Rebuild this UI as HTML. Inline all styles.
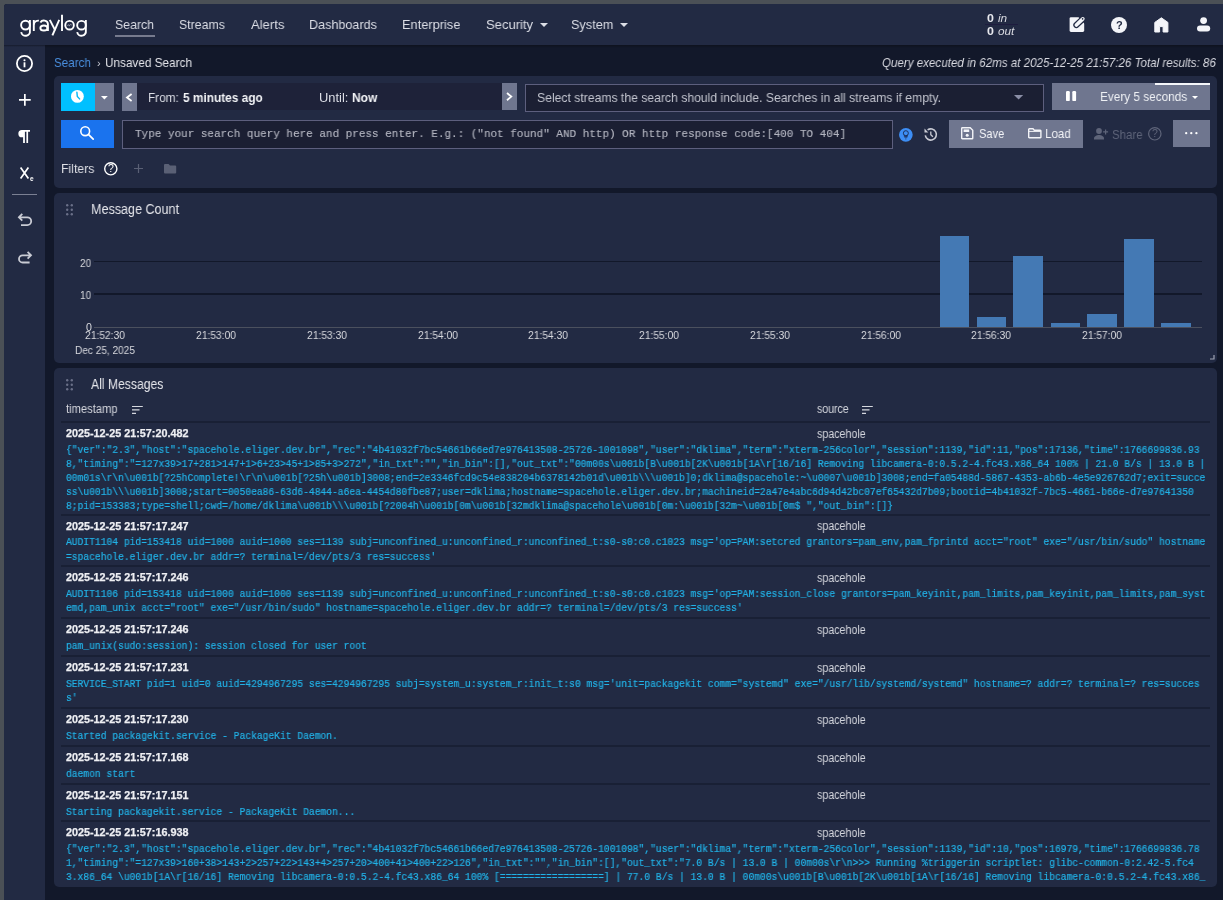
<!DOCTYPE html>
<html><head><meta charset="utf-8">
<style>
html,body{margin:0;padding:0}
body{width:1223px;height:900px;overflow:hidden;background:#4b5056;position:relative;font-family:"Liberation Sans",sans-serif;color:#e4e5ea}
.a{position:absolute}
.t{position:absolute;white-space:nowrap;line-height:1;transform-origin:0 0;will-change:transform}
.m{position:absolute;white-space:pre;font-family:"Liberation Mono",monospace;color:#22b3e8;transform-origin:0 0;-webkit-text-stroke:0.2px #22b3e8;will-change:transform}
svg{overflow:visible}
</style></head><body>

<div class="a" style="left:4px;top:4px;width:1219.00px;height:896.00px;background:#12182a;border-top-left-radius:3px"></div>
<div class="a" style="left:45px;top:45px;width:1178.00px;height:3.00px;background:linear-gradient(#0e121e,#12182a);"></div>
<div class="a" style="left:4px;top:45px;width:41.00px;height:855.00px;background:#222a43;"></div>
<div class="a" style="left:4px;top:45px;width:41.00px;height:2.00px;background:linear-gradient(#161b2c,#222a43);"></div>
<div class="a" style="left:4px;top:4px;width:1219.00px;height:41.00px;background:#222a43;border-top-left-radius:3px"></div>
<svg class="a" style="left:0px;top:0px;" width="100" height="45" viewBox="0 0 100 45"><g fill="none" stroke="#fff" stroke-width="1.9"><circle cx="25.5" cy="25.1" r="4.4"/><path d="M29.9 19.9 V30.6 A4.4 4.4 0 0 1 21.2 32.1"/><path d="M33.8 31 V20"/><path d="M33.8 24.6 A4.8 4.8 0 0 1 38.9 20.6"/><path d="M40.4 22.4 A4 3.6 0 0 1 47.9 23.8 V31"/><ellipse cx="43.9" cy="28" rx="3.55" ry="2.55"/><path d="M49.8 19.9 L55.2 30.4"/><path d="M59.2 19.9 L52.4 35.4"/><path d="M62 14.8 V31"/><circle cx="69.55" cy="25.2" r="4.3"/><circle cx="81.5" cy="25.2" r="4.35"/><path d="M85.85 19.9 V30.6 A4.35 4.35 0 0 1 77.2 32.1"/></g><path d="M67.3 25.7 L68.4 24.6 L69.3 26.1 L70.4 24.3 L71.8 25.1" fill="none" stroke="#b8bcc8" stroke-width="0.7"/></svg>
<div class="t" style="left:114.70px;top:17.59px;font-size:13.6px;transform:scaleX(0.905);color:#dcdee6;font-family:'Liberation Sans',sans-serif;font-weight:400;font-style:normal;">Search</div>
<div class="t" style="left:178.80px;top:17.59px;font-size:13.6px;transform:scaleX(0.908);color:#dcdee6;font-family:'Liberation Sans',sans-serif;font-weight:400;font-style:normal;">Streams</div>
<div class="t" style="left:250.60px;top:17.59px;font-size:13.6px;transform:scaleX(0.96);color:#dcdee6;font-family:'Liberation Sans',sans-serif;font-weight:400;font-style:normal;">Alerts</div>
<div class="t" style="left:308.90px;top:17.59px;font-size:13.6px;transform:scaleX(0.926);color:#dcdee6;font-family:'Liberation Sans',sans-serif;font-weight:400;font-style:normal;">Dashboards</div>
<div class="t" style="left:402.10px;top:17.59px;font-size:13.6px;transform:scaleX(0.942);color:#dcdee6;font-family:'Liberation Sans',sans-serif;font-weight:400;font-style:normal;">Enterprise</div>
<div class="t" style="left:485.50px;top:17.59px;font-size:13.6px;transform:scaleX(0.958);color:#dcdee6;font-family:'Liberation Sans',sans-serif;font-weight:400;font-style:normal;">Security</div>
<div class="t" style="left:571.20px;top:17.59px;font-size:13.6px;transform:scaleX(0.935);color:#dcdee6;font-family:'Liberation Sans',sans-serif;font-weight:400;font-style:normal;">System</div>
<div class="a" style="left:115px;top:35px;width:40.00px;height:2.00px;background:#777b8e;"></div>
<svg class="a" style="left:540px;top:23px;" width="8" height="4" viewBox="0 0 8 4"><path d="M0 0 L8 0 L4 4 Z" fill="#dcdee6"/></svg>
<svg class="a" style="left:620px;top:23px;" width="8" height="4" viewBox="0 0 8 4"><path d="M0 0 L8 0 L4 4 Z" fill="#dcdee6"/></svg>
<div class="t" style="left:987.30px;top:13.31px;font-size:11.8px;transform:scaleX(1.05);color:#e8e9ee;font-family:'Liberation Sans',sans-serif;font-weight:700;font-style:normal;">0</div>
<div class="t" style="left:998.30px;top:13.31px;font-size:11.8px;color:#d8d9e0;font-family:'Liberation Sans',sans-serif;font-weight:400;font-style:italic;">in</div>
<div class="a" style="left:985px;top:24px;width:33.00px;height:1.20px;background:#1d1b3e;"></div>
<div class="t" style="left:987.30px;top:26.41px;font-size:11.8px;transform:scaleX(1.05);color:#e8e9ee;font-family:'Liberation Sans',sans-serif;font-weight:700;font-style:normal;">0</div>
<div class="t" style="left:998.30px;top:26.41px;font-size:11.8px;color:#d8d9e0;font-family:'Liberation Sans',sans-serif;font-weight:400;font-style:italic;">out</div>
<svg class="a" style="left:16.3px;top:54.9px;" width="17" height="17" viewBox="0 0 17 17"><circle cx="8.5" cy="8.5" r="7.6" fill="none" stroke="#fff" stroke-width="1.8"/><rect x="7.6" y="7.3" width="1.8" height="5" fill="#fff"/><circle cx="8.5" cy="5.2" r="1.05" fill="#fff"/></svg>
<div class="t" style="left:54.00px;top:56.78px;font-size:12.9px;transform:scaleX(0.902);color:#4a8fdf;font-family:'Liberation Sans',sans-serif;font-weight:400;font-style:normal;">Search</div>
<div class="t" style="left:96.80px;top:57.89px;font-size:11px;color:#c8cad3;font-family:'Liberation Sans',sans-serif;font-weight:400;font-style:normal;">›</div>
<div class="t" style="left:104.90px;top:56.78px;font-size:12.9px;transform:scaleX(0.912);color:#e4e5ea;font-family:'Liberation Sans',sans-serif;font-weight:400;font-style:normal;">Unsaved Search</div>
<div class="t" style="left:882.00px;top:56.73px;font-size:12.6px;transform:scaleX(0.92);color:#d8d9e0;font-family:'Liberation Sans',sans-serif;font-weight:400;font-style:italic;">Query executed in 62ms at 2025-12-25 21:57:26 Total results: 86</div>
<div class="a" style="left:54px;top:76px;width:1163.00px;height:112.00px;background:#222a43;border-radius:5px"></div>
<div class="a" style="left:54px;top:193px;width:1163.00px;height:169.50px;background:#222a43;border-radius:5px"></div>
<div class="a" style="left:54px;top:368px;width:1163.00px;height:519.00px;background:#222a43;border-radius:5px"></div>
<svg class="a" style="left:1068px;top:16px;" width="18" height="18" viewBox="0 0 18 18"><rect x="1.6" y="1.2" width="14.6" height="14.7" rx="1.4" fill="#f4f5f9"/><path d="M9.6 0 H17 V8.2 Z" fill="#222a43"/><path d="M8.4 9.0 L14.8 2.9" stroke="#222a43" stroke-width="6.2" stroke-linecap="round"/><path d="M8.4 9.0 L14.8 2.9" stroke="#f4f5f9" stroke-width="3.7" stroke-linecap="round"/><circle cx="14.6" cy="2.8" r="0.85" fill="#222a43"/></svg>
<svg class="a" style="left:1111px;top:16.9px;" width="16" height="16" viewBox="0 0 16 16"><circle cx="8" cy="8" r="8" fill="#f4f5f9"/></svg>
<div class="t" style="left:1115.70px;top:19.89px;font-size:11px;color:#222a43;font-family:'Liberation Sans',sans-serif;font-weight:700;font-style:normal;">?</div>
<svg class="a" style="left:1154.4px;top:17.2px;" width="15" height="16" viewBox="0 0 15 16"><path d="M0.8 5.4 L7.35 0.8 L13.9 5.4 V15 H9.1 V9.6 H5.6 V15 H0.8 Z" fill="#f4f5f9" stroke="#f4f5f9" stroke-width="1" stroke-linejoin="round"/></svg>
<svg class="a" style="left:1197.2px;top:17px;" width="14" height="15" viewBox="0 0 14 15"><circle cx="6.6" cy="3.6" r="3.4" fill="#f4f5f9"/><rect x="0" y="8.5" width="13.2" height="6" rx="3" fill="#f4f5f9"/></svg>
<svg class="a" style="left:18.95px;top:93.95px;" width="12" height="12" viewBox="0 0 12 12"><path d="M5.85 0 V11.7 M0 5.85 H11.7" stroke="#fff" stroke-width="1.7"/></svg>
<svg class="a" style="left:18px;top:130.2px;" width="13" height="13" viewBox="0 0 13 13"><path d="M12 0 V1.7 H10.1 V13 H8.4 V1.7 H6.9 V13 H5.1 V7.3 H4 A3.65 3.65 0 0 1 4 0 Z" fill="#fff"/></svg>
<svg class="a" style="left:20px;top:167.3px;" width="9" height="12" viewBox="0 0 9 12"><path d="M0.6 0.4 L8.4 11.6 M8.4 0.4 L0.6 11.6" stroke="#fff" stroke-width="1.7"/></svg>
<div class="t" style="left:30.10px;top:176.30px;font-size:6.5px;color:#fff;font-family:'Liberation Sans',sans-serif;font-weight:700;font-style:normal;">e</div>
<div class="a" style="left:12px;top:194px;width:25.00px;height:1.30px;background:#7b8093;"></div>
<svg class="a" style="left:18px;top:213.4px;" width="15" height="14" viewBox="0 0 15 14"><path d="M4.3 0.9 L0.9 4.3 L4.3 7.7 M1.2 4.3 H9.3 A3.9 3.9 0 0 1 9.3 12.1 H3" fill="none" stroke="#c9cbd4" stroke-width="1.8"/></svg>
<svg class="a" style="left:17.6px;top:250.6px;" width="15" height="14" viewBox="0 0 15 14"><path d="M9.6 0.9 L13 4.3 L9.6 7.7 M12.7 4.3 H4.6 A3.6 3.6 0 0 0 4.6 11.5 H11.6" fill="none" stroke="#c9cbd4" stroke-width="1.8"/></svg>
<div class="a" style="left:61px;top:83.2px;width:34.00px;height:27.40px;background:#00c0ff;"></div>
<svg class="a" style="left:71.2px;top:90px;" width="13" height="13" viewBox="0 0 13 13"><circle cx="6.4" cy="6.4" r="6.4" fill="#fff"/><path d="M5.9 2.2 L6.3 6.4 L8.6 8.9" fill="none" stroke="#00b6f5" stroke-width="1.4" stroke-linecap="round"/></svg>
<div class="a" style="left:95px;top:83.2px;width:19.00px;height:27.40px;background:#6f768f;"></div>
<svg class="a" style="left:101.2px;top:95.6px;" width="7" height="4" viewBox="0 0 7 4"><path d="M0 0 H6.8 L3.4 3.6 Z" fill="#fff"/></svg>
<div class="a" style="left:122px;top:83.2px;width:15.00px;height:27.40px;background:#6f768f;"></div>
<svg class="a" style="left:127.4px;top:93.5px;" width="6" height="8" viewBox="0 0 6 8"><path d="M4.6 0 L0 3.5 L4.6 7" fill="none" stroke="#fff" stroke-width="1.8"/></svg>
<div class="a" style="left:137px;top:83.2px;width:365.00px;height:27.20px;background:#1e2239;"></div>
<div class="a" style="left:502px;top:83.2px;width:15.00px;height:27.20px;background:#6f768f;"></div>
<svg class="a" style="left:507.3px;top:93.4px;" width="6" height="8" viewBox="0 0 6 8"><path d="M0 0 L4.3 3.6 L0 7.2" fill="none" stroke="#fff" stroke-width="1.8"/></svg>
<div class="t" style="left:147.60px;top:91.58px;font-size:12.9px;transform:scaleX(0.916);color:#dcdee6;font-family:'Liberation Sans',sans-serif;font-weight:400;font-style:normal;">From:</div>
<div class="t" style="left:182.60px;top:91.58px;font-size:12.9px;transform:scaleX(0.92);color:#f4f5f8;font-family:'Liberation Sans',sans-serif;font-weight:700;font-style:normal;">5 minutes ago</div>
<div class="t" style="left:319.40px;top:91.58px;font-size:12.9px;color:#dcdee6;font-family:'Liberation Sans',sans-serif;font-weight:400;font-style:normal;">Until:</div>
<div class="t" style="left:352.20px;top:91.58px;font-size:12.9px;transform:scaleX(0.93);color:#f4f5f8;font-family:'Liberation Sans',sans-serif;font-weight:700;font-style:normal;">Now</div>
<div class="a" style="left:525px;top:83.5px;width:516.5px;height:26.5px;background:#1b1f33;border:1px solid #5d5f7e"></div>
<div class="t" style="left:536.50px;top:91.10px;font-size:13px;transform:scaleX(0.937);color:#c3c5cf;font-family:'Liberation Sans',sans-serif;font-weight:400;font-style:normal;">Select streams the search should include. Searches in all streams if empty.</div>
<svg class="a" style="left:1013.8px;top:94.7px;" width="10" height="5" viewBox="0 0 10 5"><path d="M0 0 H9.2 L4.6 4.6 Z" fill="#8a8ea6"/></svg>
<div class="a" style="left:1052.2px;top:83.1px;width:157.80px;height:27.40px;background:#6f768f;"></div>
<div class="a" style="left:1155.2px;top:83.1px;width:54.80px;height:1.90px;background:#f4f5f9;"></div>
<svg class="a" style="left:1065.5px;top:91.4px;" width="11" height="11" viewBox="0 0 11 11"><rect x="0" y="0" width="3.8" height="10.1" rx="1.2" fill="#fff"/><rect x="6.3" y="0" width="3.8" height="10.1" rx="1.2" fill="#fff"/></svg>
<div class="t" style="left:1099.50px;top:90.07px;font-size:13.5px;transform:scaleX(0.874);color:#eef0f4;font-family:'Liberation Sans',sans-serif;font-weight:400;font-style:normal;">Every 5 seconds</div>
<svg class="a" style="left:1192.2px;top:95.7px;" width="6" height="3" viewBox="0 0 6 3"><path d="M0 0 H6 L3 3 Z" fill="#fff"/></svg>
<div class="a" style="left:61px;top:120.4px;width:53.00px;height:27.30px;background:#1a73ee;"></div>
<svg class="a" style="left:80px;top:126px;" width="14" height="14" viewBox="0 0 14 14"><circle cx="5.2" cy="5.2" r="4.4" fill="none" stroke="#fff" stroke-width="1.6"/><path d="M8.4 8.4 L13.2 13.2" stroke="#fff" stroke-width="1.7" stroke-linecap="round"/></svg>
<div class="a" style="left:122.2px;top:120.4px;width:768.5px;height:26.2px;background:#1b1f33;border:1px solid #5d5f7e"></div>
<div class="m" style="left:134.6px;top:127.8px;font-size:11.8px;line-height:12px;color:#b3b5c0;-webkit-text-stroke:0.15px #b3b5c0;transform:scaleX(0.930)">Type your search query here and press enter. E.g.: ("not found" AND http) OR http response code:[400 TO 404]</div>
<svg class="a" style="left:898.75px;top:128.45px;" width="14" height="14" viewBox="0 0 14 14"><circle cx="6.85" cy="6.85" r="6.85" fill="#3d8ef5"/><circle cx="6.85" cy="5.2" r="2.5" fill="none" stroke="#1b2a50" stroke-width="0.9"/><path d="M5.3 7.3 V8.3 H8.4 V7.3" fill="none" stroke="#1b2a50" stroke-width="0.9"/><path d="M5.4 9.2 H8.3 M6.3 10.9 H7.4" stroke="#1b2a50" stroke-width="0.8"/></svg>
<svg class="a" style="left:924px;top:128px;" width="14" height="14" viewBox="0 0 14 14"><path d="M3.59 1.91 A5.6 5.6 0 1 1 1.28 7.47" fill="none" stroke="#c9cbd4" stroke-width="1.6"/><path d="M0.5 0.6 L0.5 4.4 L4.3 4.4 Z" fill="#c9cbd4"/><path d="M6.8 3.4 V6.7 L8.9 8.8" fill="none" stroke="#c9cbd4" stroke-width="1.3"/></svg>
<div class="a" style="left:949px;top:120.3px;width:133.80px;height:27.30px;background:#6f768f;"></div>
<svg class="a" style="left:961.2px;top:127.3px;" width="13" height="13" viewBox="0 0 13 13"><path d="M1.1 0.75 H9.2 L11.75 3.3 V11.2 A0.6 0.6 0 0 1 11.15 11.8 H1.3 A0.6 0.6 0 0 1 0.7 11.2 V1.3 Z" fill="none" stroke="#f2f3f7" stroke-width="1.4"/><rect x="2.6" y="2.4" width="5.6" height="2.6" fill="#f2f3f7"/><circle cx="6.2" cy="8.3" r="1.5" fill="#f2f3f7"/></svg>
<div class="t" style="left:978.70px;top:128.28px;font-size:12.9px;transform:scaleX(0.86);color:#f2f3f7;font-family:'Liberation Sans',sans-serif;font-weight:400;font-style:normal;">Save</div>
<svg class="a" style="left:1027.6px;top:128.4px;" width="14" height="11" viewBox="0 0 14 11"><path d="M0.7 1.3 A0.6 0.6 0 0 1 1.3 0.7 H5 L6.3 2.2 H12.3 A0.6 0.6 0 0 1 12.9 2.8 V9.2 A0.6 0.6 0 0 1 12.3 9.8 H1.3 A0.6 0.6 0 0 1 0.7 9.2 Z" fill="none" stroke="#f2f3f7" stroke-width="1.4"/><path d="M0.7 3.4 H12.9" stroke="#f2f3f7" stroke-width="1"/></svg>
<div class="t" style="left:1045.00px;top:128.28px;font-size:12.9px;transform:scaleX(0.9);color:#f2f3f7;font-family:'Liberation Sans',sans-serif;font-weight:400;font-style:normal;">Load</div>
<svg class="a" style="left:1093.6px;top:128px;" width="15" height="12" viewBox="0 0 15 12"><circle cx="5" cy="3" r="2.9" fill="#5e6479"/><path d="M0 11.4 V10.2 C0 8.2 2.6 6.9 5 6.9 C7.4 6.9 10 8.2 10 10.2 V11.4 Z" fill="#5e6479"/><path d="M11.6 1.4 V6.4 M9.1 3.9 H14.1" stroke="#5e6479" stroke-width="1.2"/></svg>
<div class="t" style="left:1111.90px;top:128.78px;font-size:12.9px;transform:scaleX(0.89);color:#5e6479;font-family:'Liberation Sans',sans-serif;font-weight:400;font-style:normal;">Share</div>
<svg class="a" style="left:1147.9px;top:126.8px;" width="14" height="14" viewBox="0 0 14 14"><circle cx="6.8" cy="6.8" r="6.2" fill="none" stroke="#5e6479" stroke-width="1.2"/></svg>
<div class="t" style="left:1151.70px;top:128.31px;font-size:10.5px;color:#5e6479;font-family:'Liberation Sans',sans-serif;font-weight:400;font-style:normal;">?</div>
<div class="a" style="left:1172.8px;top:120.4px;width:37.20px;height:27.00px;background:#6f768f;"></div>
<svg class="a" style="left:1185px;top:132.4px;" width="13" height="3" viewBox="0 0 13 3"><circle cx="1.2" cy="1.2" r="1.15" fill="#fff"/><circle cx="6.3" cy="1.2" r="1.15" fill="#fff"/><circle cx="11.4" cy="1.2" r="1.15" fill="#fff"/></svg>
<div class="t" style="left:61.30px;top:161.93px;font-size:13.2px;transform:scaleX(0.93);color:#dfe0e6;font-family:'Liberation Sans',sans-serif;font-weight:400;font-style:normal;">Filters</div>
<svg class="a" style="left:103.8px;top:161.5px;" width="14" height="14" viewBox="0 0 14 14"><circle cx="6.8" cy="6.8" r="6.1" fill="none" stroke="#fff" stroke-width="1.4"/></svg>
<div class="t" style="left:107.60px;top:163.21px;font-size:10.5px;color:#fff;font-family:'Liberation Sans',sans-serif;font-weight:400;font-style:normal;">?</div>
<svg class="a" style="left:134px;top:163.8px;" width="9" height="9" viewBox="0 0 9 9"><path d="M4.5 0 V9 M0 4.5 H9" stroke="#5a6075" stroke-width="1.2"/></svg>
<svg class="a" style="left:163.8px;top:163.5px;" width="13" height="10" viewBox="0 0 13 10"><path d="M0 1 A1 1 0 0 1 1 0 H4.6 L6 1.5 H11.2 A1 1 0 0 1 12.2 2.5 V8.5 A1 1 0 0 1 11.2 9.5 H1 A1 1 0 0 1 0 8.5 Z" fill="#5a6075"/></svg>
<svg class="a" style="left:65.6px;top:203.5px;" width="8" height="12" viewBox="0 0 8 12"><circle cx="1.2" cy="1.2" r="1.2" fill="#6a7088"/><circle cx="1.2" cy="5.8" r="1.2" fill="#6a7088"/><circle cx="1.2" cy="10.2" r="1.2" fill="#6a7088"/><circle cx="5.8" cy="1.2" r="1.2" fill="#6a7088"/><circle cx="5.8" cy="5.8" r="1.2" fill="#6a7088"/><circle cx="5.8" cy="10.2" r="1.2" fill="#6a7088"/></svg>
<div class="t" style="left:90.60px;top:202.19px;font-size:14.9px;transform:scaleX(0.844);color:#e4e5ea;font-family:'Liberation Sans',sans-serif;font-weight:400;font-style:normal;">Message Count</div>
<div class="a" style="left:94px;top:260.6px;width:1107.50px;height:1.80px;background:#12182a;"></div>
<div class="a" style="left:94px;top:293.4px;width:1107.50px;height:1.80px;background:#12182a;"></div>
<div class="a" style="left:939.8px;top:236.4px;width:29.60px;height:90.60px;background:#4479b4;"></div>
<div class="a" style="left:976.6px;top:316.7px;width:29.60px;height:10.30px;background:#4479b4;"></div>
<div class="a" style="left:1013.4px;top:255.7px;width:29.60px;height:71.30px;background:#4479b4;"></div>
<div class="a" style="left:1050.6px;top:323.1px;width:29.60px;height:3.90px;background:#4479b4;"></div>
<div class="a" style="left:1087.2px;top:313.6px;width:29.60px;height:13.40px;background:#4479b4;"></div>
<div class="a" style="left:1124.1px;top:239.4px;width:29.60px;height:87.60px;background:#4479b4;"></div>
<div class="a" style="left:1161px;top:323.1px;width:29.60px;height:3.90px;background:#4479b4;"></div>
<div class="a" style="left:94px;top:326.6px;width:1107.50px;height:1.00px;background:#4b505e;"></div>
<div class="t" style="left:80.00px;top:257.73px;font-size:10.6px;transform:scaleX(0.94);color:#d8d9de;font-family:'Liberation Sans',sans-serif;font-weight:400;font-style:normal;">20</div>
<div class="t" style="left:80.20px;top:289.83px;font-size:10.6px;transform:scaleX(0.94);color:#d8d9de;font-family:'Liberation Sans',sans-serif;font-weight:400;font-style:normal;">10</div>
<div class="t" style="left:85.60px;top:321.73px;font-size:10.6px;transform:scaleX(0.94);color:#d8d9de;font-family:'Liberation Sans',sans-serif;font-weight:400;font-style:normal;">0</div>
<div class="t" style="left:85.35px;top:329.93px;font-size:10.6px;transform:scaleX(0.97);color:#d8d9de;font-family:'Liberation Sans',sans-serif;font-weight:400;font-style:normal;">21:52:30</div>
<div class="t" style="left:196.09px;top:329.93px;font-size:10.6px;transform:scaleX(0.97);color:#d8d9de;font-family:'Liberation Sans',sans-serif;font-weight:400;font-style:normal;">21:53:00</div>
<div class="t" style="left:306.83px;top:329.93px;font-size:10.6px;transform:scaleX(0.97);color:#d8d9de;font-family:'Liberation Sans',sans-serif;font-weight:400;font-style:normal;">21:53:30</div>
<div class="t" style="left:417.57px;top:329.93px;font-size:10.6px;transform:scaleX(0.97);color:#d8d9de;font-family:'Liberation Sans',sans-serif;font-weight:400;font-style:normal;">21:54:00</div>
<div class="t" style="left:528.31px;top:329.93px;font-size:10.6px;transform:scaleX(0.97);color:#d8d9de;font-family:'Liberation Sans',sans-serif;font-weight:400;font-style:normal;">21:54:30</div>
<div class="t" style="left:639.05px;top:329.93px;font-size:10.6px;transform:scaleX(0.97);color:#d8d9de;font-family:'Liberation Sans',sans-serif;font-weight:400;font-style:normal;">21:55:00</div>
<div class="t" style="left:749.79px;top:329.93px;font-size:10.6px;transform:scaleX(0.97);color:#d8d9de;font-family:'Liberation Sans',sans-serif;font-weight:400;font-style:normal;">21:55:30</div>
<div class="t" style="left:860.53px;top:329.93px;font-size:10.6px;transform:scaleX(0.97);color:#d8d9de;font-family:'Liberation Sans',sans-serif;font-weight:400;font-style:normal;">21:56:00</div>
<div class="t" style="left:971.27px;top:329.93px;font-size:10.6px;transform:scaleX(0.97);color:#d8d9de;font-family:'Liberation Sans',sans-serif;font-weight:400;font-style:normal;">21:56:30</div>
<div class="t" style="left:1082.01px;top:329.93px;font-size:10.6px;transform:scaleX(0.97);color:#d8d9de;font-family:'Liberation Sans',sans-serif;font-weight:400;font-style:normal;">21:57:00</div>
<div class="t" style="left:75.30px;top:345.43px;font-size:10.6px;transform:scaleX(0.95);color:#d8d9de;font-family:'Liberation Sans',sans-serif;font-weight:400;font-style:normal;">Dec 25, 2025</div>
<svg class="a" style="left:1210px;top:355px;" width="5" height="5" viewBox="0 0 5 5"><path d="M0 4 H4 V0" fill="none" stroke="#a0a4b4" stroke-width="1.2"/></svg>
<svg class="a" style="left:65.6px;top:378.7px;" width="8" height="12" viewBox="0 0 8 12"><circle cx="1.2" cy="1.2" r="1.2" fill="#6a7088"/><circle cx="1.2" cy="5.8" r="1.2" fill="#6a7088"/><circle cx="1.2" cy="10.2" r="1.2" fill="#6a7088"/><circle cx="5.8" cy="1.2" r="1.2" fill="#6a7088"/><circle cx="5.8" cy="5.8" r="1.2" fill="#6a7088"/><circle cx="5.8" cy="10.2" r="1.2" fill="#6a7088"/></svg>
<div class="t" style="left:90.60px;top:377.39px;font-size:14.9px;transform:scaleX(0.818);color:#e4e5ea;font-family:'Liberation Sans',sans-serif;font-weight:400;font-style:normal;">All Messages</div>
<div class="t" style="left:65.50px;top:403.24px;font-size:12px;transform:scaleX(0.93);color:#d5d7de;font-family:'Liberation Sans',sans-serif;font-weight:400;font-style:normal;">timestamp</div>
<svg class="a" style="left:131.5px;top:406px;" width="11" height="8" viewBox="0 0 11 8"><path d="M0 0.55 H10.8 M0 3.85 H7.5 M0 7.35 H4" stroke="#d5d7de" stroke-width="1.1"/></svg>
<div class="t" style="left:816.60px;top:403.24px;font-size:12px;transform:scaleX(0.88);color:#d5d7de;font-family:'Liberation Sans',sans-serif;font-weight:400;font-style:normal;">source</div>
<svg class="a" style="left:861.8px;top:406px;" width="11" height="8" viewBox="0 0 11 8"><path d="M0 0.55 H10.8 M0 3.85 H7.5 M0 7.35 H4" stroke="#d5d7de" stroke-width="1.1"/></svg>
<div class="a" style="left:61px;top:421px;width:1149.00px;height:2.00px;background:#192035;"></div>
<div class="t" style="left:65.50px;top:428.06px;font-size:10.8px;color:#eeeff3;font-family:'Liberation Sans',sans-serif;font-weight:700;font-style:normal;-webkit-text-stroke:0.25px #eeeff3;">2025-12-25 21:57:20.482</div>
<div class="t" style="left:816.60px;top:427.64px;font-size:12px;transform:scaleX(0.89);color:#d5d7de;font-family:'Liberation Sans',sans-serif;font-weight:400;font-style:normal;">spacehole</div>
<div class="m" style="left:65.6px;top:444px;font-size:10.2px;line-height:14px;height:14px;transform:scaleX(0.946)">{&quot;ver&quot;:&quot;2.3&quot;,&quot;host&quot;:&quot;spacehole.eliger.dev.br&quot;,&quot;rec&quot;:&quot;4b41032f7bc54661b66ed7e976413508-25726-1001098&quot;,&quot;user&quot;:&quot;dklima&quot;,&quot;term&quot;:&quot;xterm-256color&quot;,&quot;session&quot;:1139,&quot;id&quot;:11,&quot;pos&quot;:17136,&quot;time&quot;:1766699836.93</div>
<div class="m" style="left:65.6px;top:458px;font-size:10.2px;line-height:14px;height:14px;transform:scaleX(0.946)">8,&quot;timing&quot;:&quot;=127x39&gt;17+281&gt;147+1&gt;6+23&gt;45+1&gt;85+3&gt;272&quot;,&quot;in_txt&quot;:&quot;&quot;,&quot;in_bin&quot;:[],&quot;out_txt&quot;:&quot;00m00s\u001b[B\u001b[2K\u001b[1A\r[16/16] Removing libcamera-0:0.5.2-4.fc43.x86_64 100% | 21.0 B/s | 13.0 B |</div>
<div class="m" style="left:65.6px;top:472px;font-size:10.2px;line-height:14px;height:14px;transform:scaleX(0.946)">00m01s\r\n\u001b[?25hComplete!\r\n\u001b[?25h\u001b]3008;end=2e3346fcd9c54e838204b6378142b01d\u001b\\\u001b]0;dklima@spacehole:~\u0007\u001b]3008;end=fa05488d-5867-4353-ab6b-4e5e926762d7;exit=succe</div>
<div class="m" style="left:65.6px;top:486px;font-size:10.2px;line-height:14px;height:14px;transform:scaleX(0.946)">ss\u001b\\\u001b]3008;start=0050ea86-63d6-4844-a6ea-4454d80fbe87;user=dklima;hostname=spacehole.eliger.dev.br;machineid=2a47e4abc6d94d42bc07ef65432d7b09;bootid=4b41032f-7bc5-4661-b66e-d7e97641350</div>
<div class="m" style="left:65.6px;top:500px;font-size:10.2px;line-height:14px;height:14px;transform:scaleX(0.946)">8;pid=153383;type=shell;cwd=/home/dklima\u001b\\\u001b[?2004h\u001b[0m\u001b[32mdklima@spacehole\u001b[0m:\u001b[32m~\u001b[0m$ &quot;,&quot;out_bin&quot;:[]}</div>
<div class="a" style="left:61px;top:513.6px;width:1149.00px;height:2.00px;background:#192035;"></div>
<div class="t" style="left:65.50px;top:520.66px;font-size:10.8px;color:#eeeff3;font-family:'Liberation Sans',sans-serif;font-weight:700;font-style:normal;-webkit-text-stroke:0.25px #eeeff3;">2025-12-25 21:57:17.247</div>
<div class="t" style="left:816.60px;top:520.24px;font-size:12px;transform:scaleX(0.89);color:#d5d7de;font-family:'Liberation Sans',sans-serif;font-weight:400;font-style:normal;">spacehole</div>
<div class="m" style="left:65.6px;top:536px;font-size:10.2px;line-height:14px;height:14px;transform:scaleX(0.946)">AUDIT1104 pid=153418 uid=1000 auid=1000 ses=1139 subj=unconfined_u:unconfined_r:unconfined_t:s0-s0:c0.c1023 msg=&#x27;op=PAM:setcred grantors=pam_env,pam_fprintd acct=&quot;root&quot; exe=&quot;/usr/bin/sudo&quot; hostname</div>
<div class="m" style="left:65.6px;top:551px;font-size:10.2px;line-height:14px;height:14px;transform:scaleX(0.946)">=spacehole.eliger.dev.br addr=? terminal=/dev/pts/3 res=success&#x27;</div>
<div class="a" style="left:61px;top:565.3px;width:1149.00px;height:2.00px;background:#192035;"></div>
<div class="t" style="left:65.50px;top:572.36px;font-size:10.8px;color:#eeeff3;font-family:'Liberation Sans',sans-serif;font-weight:700;font-style:normal;-webkit-text-stroke:0.25px #eeeff3;">2025-12-25 21:57:17.246</div>
<div class="t" style="left:816.60px;top:571.94px;font-size:12px;transform:scaleX(0.89);color:#d5d7de;font-family:'Liberation Sans',sans-serif;font-weight:400;font-style:normal;">spacehole</div>
<div class="m" style="left:65.6px;top:588px;font-size:10.2px;line-height:14px;height:14px;transform:scaleX(0.946)">AUDIT1106 pid=153418 uid=1000 auid=1000 ses=1139 subj=unconfined_u:unconfined_r:unconfined_t:s0-s0:c0.c1023 msg=&#x27;op=PAM:session_close grantors=pam_keyinit,pam_limits,pam_keyinit,pam_limits,pam_syst</div>
<div class="m" style="left:65.6px;top:602px;font-size:10.2px;line-height:14px;height:14px;transform:scaleX(0.946)">emd,pam_unix acct=&quot;root&quot; exe=&quot;/usr/bin/sudo&quot; hostname=spacehole.eliger.dev.br addr=? terminal=/dev/pts/3 res=success&#x27;</div>
<div class="a" style="left:61px;top:617.3px;width:1149.00px;height:2.00px;background:#192035;"></div>
<div class="t" style="left:65.50px;top:624.36px;font-size:10.8px;color:#eeeff3;font-family:'Liberation Sans',sans-serif;font-weight:700;font-style:normal;-webkit-text-stroke:0.25px #eeeff3;">2025-12-25 21:57:17.246</div>
<div class="t" style="left:816.60px;top:623.94px;font-size:12px;transform:scaleX(0.89);color:#d5d7de;font-family:'Liberation Sans',sans-serif;font-weight:400;font-style:normal;">spacehole</div>
<div class="m" style="left:65.6px;top:640px;font-size:10.2px;line-height:14px;height:14px;transform:scaleX(0.946)">pam_unix(sudo:session): session closed for user root</div>
<div class="a" style="left:61px;top:655.3px;width:1149.00px;height:2.00px;background:#192035;"></div>
<div class="t" style="left:65.50px;top:662.36px;font-size:10.8px;color:#eeeff3;font-family:'Liberation Sans',sans-serif;font-weight:700;font-style:normal;-webkit-text-stroke:0.25px #eeeff3;">2025-12-25 21:57:17.231</div>
<div class="t" style="left:816.60px;top:661.94px;font-size:12px;transform:scaleX(0.89);color:#d5d7de;font-family:'Liberation Sans',sans-serif;font-weight:400;font-style:normal;">spacehole</div>
<div class="m" style="left:65.6px;top:678px;font-size:10.2px;line-height:14px;height:14px;transform:scaleX(0.946)">SERVICE_START pid=1 uid=0 auid=4294967295 ses=4294967295 subj=system_u:system_r:init_t:s0 msg=&#x27;unit=packagekit comm=&quot;systemd&quot; exe=&quot;/usr/lib/systemd/systemd&quot; hostname=? addr=? terminal=? res=succes</div>
<div class="m" style="left:65.6px;top:692px;font-size:10.2px;line-height:14px;height:14px;transform:scaleX(0.946)">s&#x27;</div>
<div class="a" style="left:61px;top:707.1px;width:1149.00px;height:2.00px;background:#192035;"></div>
<div class="t" style="left:65.50px;top:714.16px;font-size:10.8px;color:#eeeff3;font-family:'Liberation Sans',sans-serif;font-weight:700;font-style:normal;-webkit-text-stroke:0.25px #eeeff3;">2025-12-25 21:57:17.230</div>
<div class="t" style="left:816.60px;top:713.74px;font-size:12px;transform:scaleX(0.89);color:#d5d7de;font-family:'Liberation Sans',sans-serif;font-weight:400;font-style:normal;">spacehole</div>
<div class="m" style="left:65.6px;top:730px;font-size:10.2px;line-height:14px;height:14px;transform:scaleX(0.946)">Started packagekit.service - PackageKit Daemon.</div>
<div class="a" style="left:61px;top:745.2px;width:1149.00px;height:2.00px;background:#192035;"></div>
<div class="t" style="left:65.50px;top:752.26px;font-size:10.8px;color:#eeeff3;font-family:'Liberation Sans',sans-serif;font-weight:700;font-style:normal;-webkit-text-stroke:0.25px #eeeff3;">2025-12-25 21:57:17.168</div>
<div class="t" style="left:816.60px;top:751.84px;font-size:12px;transform:scaleX(0.89);color:#d5d7de;font-family:'Liberation Sans',sans-serif;font-weight:400;font-style:normal;">spacehole</div>
<div class="m" style="left:65.6px;top:768px;font-size:10.2px;line-height:14px;height:14px;transform:scaleX(0.946)">daemon start</div>
<div class="a" style="left:61px;top:782.8px;width:1149.00px;height:2.00px;background:#192035;"></div>
<div class="t" style="left:65.50px;top:789.86px;font-size:10.8px;color:#eeeff3;font-family:'Liberation Sans',sans-serif;font-weight:700;font-style:normal;-webkit-text-stroke:0.25px #eeeff3;">2025-12-25 21:57:17.151</div>
<div class="t" style="left:816.60px;top:789.44px;font-size:12px;transform:scaleX(0.89);color:#d5d7de;font-family:'Liberation Sans',sans-serif;font-weight:400;font-style:normal;">spacehole</div>
<div class="m" style="left:65.6px;top:806px;font-size:10.2px;line-height:14px;height:14px;transform:scaleX(0.946)">Starting packagekit.service - PackageKit Daemon...</div>
<div class="a" style="left:61px;top:820.0px;width:1149.00px;height:2.00px;background:#192035;"></div>
<div class="t" style="left:65.50px;top:827.06px;font-size:10.8px;color:#eeeff3;font-family:'Liberation Sans',sans-serif;font-weight:700;font-style:normal;-webkit-text-stroke:0.25px #eeeff3;">2025-12-25 21:57:16.938</div>
<div class="t" style="left:816.60px;top:826.64px;font-size:12px;transform:scaleX(0.89);color:#d5d7de;font-family:'Liberation Sans',sans-serif;font-weight:400;font-style:normal;">spacehole</div>
<div class="m" style="left:65.6px;top:843px;font-size:10.2px;line-height:14px;height:14px;transform:scaleX(0.946)">{&quot;ver&quot;:&quot;2.3&quot;,&quot;host&quot;:&quot;spacehole.eliger.dev.br&quot;,&quot;rec&quot;:&quot;4b41032f7bc54661b66ed7e976413508-25726-1001098&quot;,&quot;user&quot;:&quot;dklima&quot;,&quot;term&quot;:&quot;xterm-256color&quot;,&quot;session&quot;:1139,&quot;id&quot;:10,&quot;pos&quot;:16979,&quot;time&quot;:1766699836.78</div>
<div class="m" style="left:65.6px;top:857px;font-size:10.2px;line-height:14px;height:14px;transform:scaleX(0.946)">1,&quot;timing&quot;:&quot;=127x39&gt;160+38&gt;143+2&gt;257+22&gt;143+4&gt;257+20&gt;400+41&gt;400+22&gt;126&quot;,&quot;in_txt&quot;:&quot;&quot;,&quot;in_bin&quot;:[],&quot;out_txt&quot;:&quot;7.0 B/s | 13.0 B | 00m00s\r\n&gt;&gt;&gt; Running %triggerin scriptlet: glibc-common-0:2.42-5.fc4</div>
<div class="m" style="left:65.6px;top:871px;font-size:10.2px;line-height:14px;height:14px;transform:scaleX(0.946)">3.x86_64 \u001b[1A\r[16/16] Removing libcamera-0:0.5.2-4.fc43.x86_64 100% [==================] | 77.0 B/s | 13.0 B | 00m00s\u001b[B\u001b[2K\u001b[1A\r[16/16] Removing libcamera-0:0.5.2-4.fc43.x86_</div>
<div class="a" style="left:45px;top:887px;width:1178.00px;height:13.00px;background:#12182a;"></div>
</body></html>
